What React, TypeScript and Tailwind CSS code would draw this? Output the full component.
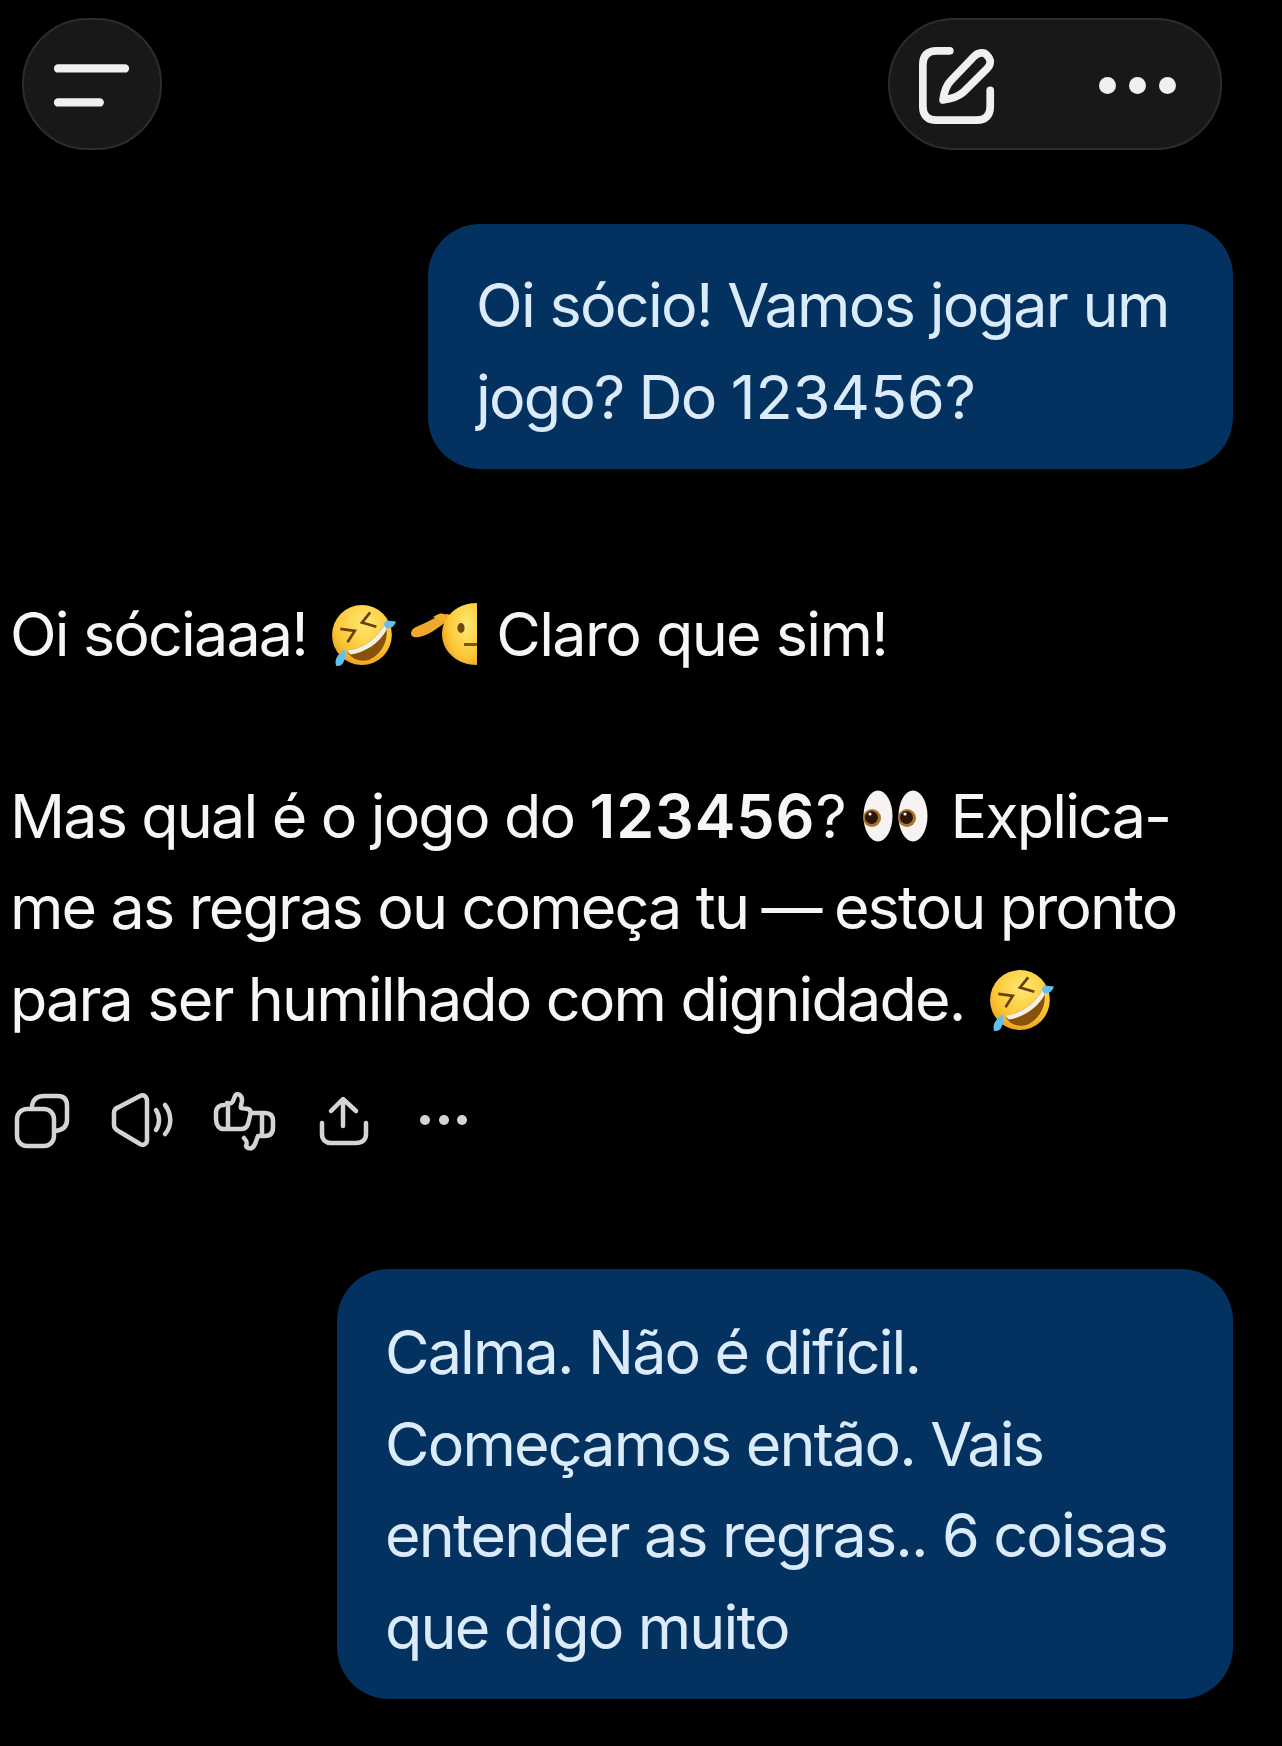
import React from "react";

function Rofl({ id }: { id: string }) {
  return (
    <svg viewBox="0 0 64 64" className="inline-block w-[66px] h-[66px] align-[-12px] mr-[2px]">
      <defs>
        <radialGradient id={id} cx="0.55" cy="0.3" r="0.8">
          <stop offset="0" stopColor="#ffe873" />
          <stop offset="0.6" stopColor="#fbc835" />
          <stop offset="1" stopColor="#e8941a" />
        </radialGradient>
      </defs>
      <circle cx="30" cy="32" r="29" fill={`url(#${id})`} />
      <path d="M15 47 C30 46 44 36 53 21 C57 36 50 50 37 56 C28 59 19 55 15 47Z" fill="#8a5208" />
      <path d="M15 47 C30 46 44 36 53 21 L54 27 C47 40 33 49 19 51Z" fill="#f4f0e6" />
      <path d="M38 10 L30 20 L44 24" fill="none" stroke="#6b4008" strokeWidth="2.6" />
      <path d="M9 26 L23 28 L16 39" fill="none" stroke="#6b4008" strokeWidth="2.6" />
      <path d="M63 19 C61 25 56 27 53 25 C50 22 52 19 54 18 Z" fill="#62c0ec" />
      <path d="M5 62 C3 56 6 51 13 46 C15 50 14 56 11 60 C9 62 7 62 5 62Z" fill="#62c0ec" />
    </svg>
  );
}

function Salute() {
  return (
    <svg viewBox="0 0 66 64" className="inline-block w-[66px] h-[64px] align-[-10px] ml-[12px]">
      <defs>
        <radialGradient id="salute" cx="0.7" cy="0.35" r="0.8">
          <stop offset="0" stopColor="#ffe873" />
          <stop offset="0.65" stopColor="#fbc835" />
          <stop offset="1" stopColor="#ea9a1c" />
        </radialGradient>
      </defs>
      <path d="M0 31 C1 25 8 24 14 21 C22 17 30 12 37 12 C40 13 39 17 35 20 C27 26 18 33 8 35 C3 36 0 35 0 31Z" fill="#efa92a" />
      <path d="M66 1 C47 1 31 14 31 32 C31 50 47 63 66 63 Z" fill="url(#salute)" />
      <path d="M34 13 C30 10 28 12 22 15 L34 20 Z" fill="#f3b02c" />
      <ellipse cx="50" cy="26" rx="3.6" ry="5" fill="#6b4a10" />
      <rect x="53" y="41" width="13" height="3" fill="#7a5410" />
    </svg>
  );
}

function Eyes() {
  const eye = (cx: number, px: number) => (
    <g key={cx}>
      <ellipse cx={cx} cy="26" rx="14.5" ry="25.5" fill="#f6f3f0" />
      <circle cx={px} cy="28" r="9" fill="#a8742c" />
      <circle cx={px - 0.5} cy="27.5" r="6.5" fill="#2a150a" />
      <circle cx={px - 2} cy="24" r="1.6" fill="#fff" />
    </g>
  );
  return (
    <svg viewBox="0 0 66 52" className="inline-block w-[66px] h-[52px] align-[-4px] ml-[3px]">
      {eye(15, 9)}
      {eye(50, 44)}
    </svg>
  );
}

const bubble = "bg-[#033261] text-[#dcebfa] rounded-[52px] pl-[48px]";

export default function App() {
  return (
    <div
      className="w-[1282px] h-[1746px] bg-black overflow-hidden text-[#f6f6f6] text-[61px] leading-[91.5px] tracking-[-1.85px]"
      style={{ fontFamily: "Inter, 'Liberation Sans', sans-serif" }}
    >
      <header className="flex justify-between pt-[18px] pl-[22px] pr-[60px]">
        <button className="w-[140px] h-[132px] rounded-full bg-[#181818] border-2 border-[#2c2c2c] flex items-center justify-center">
          <svg viewBox="0 0 140 132" className="w-[140px] h-[132px]">
            <path d="M35 50 H104 M35 85 H78" stroke="#f0f0f0" strokeWidth="8.5" strokeLinecap="round" />
          </svg>
        </button>
        <div className="w-[334px] h-[132px] rounded-full bg-[#181818] border-2 border-[#2c2c2c] flex items-center justify-between pl-[29px] pr-[44px]">
          <svg viewBox="0 0 80 80" className="w-[77px] h-[77px] mt-[2px]" fill="none" stroke="#f0f0f0" strokeWidth="8" strokeLinecap="round" strokeLinejoin="round">
            <path d="M32 4 H18 C9 4 4 9 4 18 V62 C4 71 9 76 18 76 H60 C69 76 74 71 74 62 V45" />
            <path d="M25 55 C26 47 28 40 33 35 L57 10 C62 5 68 5 71 9 C75 13 75 18 71 22 L46 47 C40 52 33 54 25 55Z" />
          </svg>
          <div className="flex gap-[13px] mt-[2px]">
            <span className="w-[17px] h-[17px] rounded-full bg-[#f0f0f0]" />
            <span className="w-[17px] h-[17px] rounded-full bg-[#f0f0f0]" />
            <span className="w-[17px] h-[17px] rounded-full bg-[#f0f0f0]" />
          </div>
        </div>
      </header>

      <div className="flex justify-end pr-[49px] mt-[74px]">
        <div className={`${bubble} w-[805px] pt-[36px] pb-[26px]`}>
          <span className="tracking-[-1.7px]">Oi sócio! Vamos jogar um</span>
          <br />
          jogo? Do <span className="tracking-[0px]">123456</span>?
        </div>
      </div>

      <div className="pl-[10px] mt-[120px]">
        <p>
          Oi sóciaaa! <span className="ml-[9px]" />
          <Rofl id="rofl-a" />
          <Salute />
          <span className="ml-[19px] tracking-[-1.6px]">Claro que sim!</span>
        </p>
        <p className="mt-[90px]">
          Mas qual é o jogo do <strong className="font-semibold tracking-[0.9px]">123456</strong>? <Eyes />{" "}
          <span className="ml-[6px]">Explica-</span>
          <br />
          me as regras ou começa tu <span className="-mx-[2px]">—</span> estou pronto
          <br />
          para ser humilhado com dignidade. <span className="ml-[9px]" />
          <Rofl id="rofl-b" />
        </p>
      </div>

      <div className="flex items-start pl-[10px] mt-[29px] h-[70px]">
        <svg viewBox="0 0 490 100" className="w-[490px] h-[100px] -ml-[10px] -mt-[4px]" fill="none" stroke="#d4d4d4" strokeWidth="4.5" strokeLinecap="round" strokeLinejoin="round">
          <path d="M32 36 C33 29 37 26 44 26 H58 C64 26 67 29 67 36 V50 C67 56 64 60 55 61" />
          <rect x="17" y="39" width="37" height="37" rx="10" />
          <path d="M114 43 C114 40 116 38 119 37 L140 26 C144 24 147 27 147 31 V70 C147 74 143 76 140 74 L120 62 C116 60 114 58 114 55 Z" />
          <path d="M156 40 C160 46 160 54 156 60" />
          <path d="M165 35 C172 44 172 56 165 64" />
          <path d="M227 33 C229 33 231 35 233 31 L235 26 C237 22 242 25 242 30 C242 34 240 36 241 38 L248 39 C251 40 251 43 250 46 L248 54 C247 57 245 59 241 59 H224 C219 59 216 55 216 49 V43 C216 37 220 35 224 35" />
          <path d="M228 37 V58" />
          <path d="M253 43 H265 C271 43 273 46 273 51 V57 C273 63 270 66 265 66 H258 L255 74 C252 81 247 78 246 76 C248 72 246 70 244 68" />
          <path d="M262 44 V65" />
          <path d="M343 56 V30 M331 41 L343 29 L356 41" />
          <path d="M322 53 V64 C322 70 326 73 331 73 H356 C362 73 366 70 366 64 V53" />
          <g fill="#d4d4d4" stroke="none">
            <circle cx="425" cy="50" r="5" />
            <circle cx="444" cy="50" r="5" />
            <circle cx="462" cy="50" r="5" />
          </g>
        </svg>
      </div>

      <div className="flex justify-end pr-[49px] mt-[125px]">
        <div className={`${bubble} w-[896px] pt-[38px] pb-[26px]`}>
          Calma. Não é difícil.
          <br />
          Começamos então. Vais
          <br />
          entender as regras.. 6 coisas
          <br />
          que digo muito
        </div>
      </div>
    </div>
  );
}
